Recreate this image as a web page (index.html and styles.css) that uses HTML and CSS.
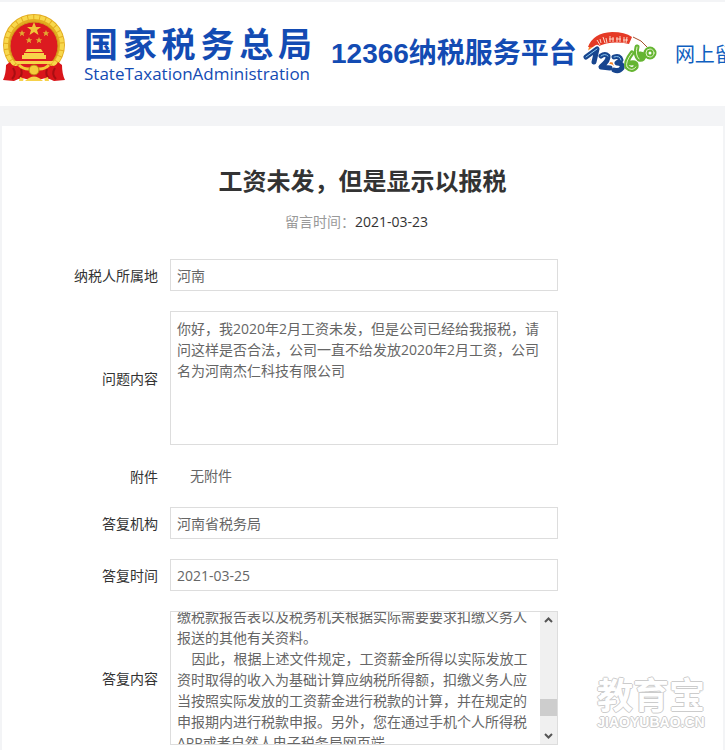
FILE: index.html
```html
<!DOCTYPE html>
<html lang="zh-CN">
<head>
    <meta charset="UTF-8">
    <meta name="viewport" content="width=device-width, initial-scale=1.0">
    <title>12366纳税服务平台</title>
    <link rel="stylesheet" href="styles.css">
</head>
<body>
<header class="header">
    <!-- National emblem -->
    <svg class="emblem" viewBox="0 0 66 72">
        <circle cx="33" cy="32" r="31" fill="#e3ac20"/>
        <circle cx="33" cy="32" r="28" fill="none" stroke="#f8d84c" stroke-width="4" stroke-dasharray="5 1"/>
        <circle cx="33" cy="33" r="24" fill="#dc1a20" stroke="#d09a1a"/>
        <path d="M33 9 l2 5 h5 l-4 3 1.500 5 -4.500-3 -4.500 3 1.500-5 -4-3 h5z" fill="#f0c63a"/>
        <g fill="#e2a832">
            <path d="M21 17 l1 2.300 h2.300 l-1.800 1.500 .6 2.400 -2.100-1.400 -2.100 1.400 .6-2.400 -1.800-1.500 H20z"/>
            <path d="M45 17 l1 2.300 h2.300 l-1.800 1.500 .6 2.400 -2.100-1.400 -2.100 1.400 .6-2.400 -1.800-1.500 H44z"/>
            <path d="M28 24 l1 2.300 h2.300 l-1.800 1.500 .6 2.400 -2.100-1.400 -2.100 1.400 .6-2.400 -1.800-1.500 H27z"/>
            <path d="M38 24 l1 2.300 h2.300 l-1.800 1.500 .6 2.400 -2.100-1.400 -2.100 1.400 .6-2.400 -1.800-1.500 H37z"/>
        </g>
        <path d="M26 36 h14 l2 3 h-18z M23 40 h20 v2 h-20z M21 42 h24 v4 h-24z M13 48 h40 l-3 3 H16z" fill="#f7d34a"/>
        <path d="M9 49 Q12 55 18 52 Q24 57 33 56 Q42 57 48 52 Q54 55 57 49 L61 52 Q61 61 64 67 L53 68 Q46 64 41 66 L25 66 Q20 64 13 68 L2 67 Q5 61 5 52 Z" fill="#d9151a"/>
        <path d="M12 55 Q16 61 11 66 M54 55 Q50 61 55 66 M20 56 Q22 62 18 65 M46 56 Q44 62 48 65" fill="none" stroke="#a80e12" stroke-width="2"/>
        <path d="M18 52 Q24 58 33 55 Q42 58 48 52" fill="none" stroke="#f3c938" stroke-width="3"/>
        <circle cx="33" cy="57" r="5" fill="#f4cc3b" stroke="#bb8211"/>
        <path d="M24 68 Q33 59 42 68 Z M19 64 q5 1 3 4 h-4z M47 64 q-5 1 -3 4 h4z" fill="#f6d14a"/>
    </svg>
    <div class="brand">
        <div class="brand-cn">国家税务总局</div>
        <div class="brand-en">StateTaxationAdministration</div>
    </div>
    <div class="platform">12366纳税服务平台</div>
    <!-- 12366 hotline mark -->
    <svg class="hotline" viewBox="0 0 74 44">
        <path d="M5 15 Q10 1 29 0 Q42 0 49 5 L46 12 Q28 8 14 15 Z" fill="#e53a26"/>
        <path d="M50 5 Q59 8 64 15" fill="none" stroke="#a8502c" stroke-width="1"/>
        <path d="M6 15 Q3 22 10 32 Q13 24 15 15 Z" fill="#f38022"/>
        <path d="M23 29 Q36 33 50 30 L44 38 Q33 40 24 38Z" fill="#f38022"/>
        <path d="M14 8 l3 5 M17 7 l1 4 M20 5 l2 6 M23 6 l1 5 M27 4 v6 M30 5 v5 M26 7 h5 M34 5 v5 M37 4 v6 M33 7 h5 M41 5 v6 M44 5 l-1 6 M40 8 h5" stroke="#fbd6c8" stroke-width="1"/>
        <g fill="none" stroke-linecap="round" stroke-linejoin="round">
            <g stroke="#fff" stroke-width="8">
                <path d="M3 25 L14 17 L11 30"/>
                <path d="M18 24 Q22 21 25 24 Q26 28 18 35 L27 36"/>
                <path d="M31 25 Q37 23 38 28 L34 31 Q40 31 39 36 Q36 40 31 38"/>
                <path d="M49 21 Q42 30 44 35 Q49 40 53 35 Q54 30 48 31"/>
            </g>
            <g stroke="#17458e" stroke-width="5">
                <path d="M3 25 L14 17 L11 30"/>
                <path d="M18 24 Q22 21 25 24 Q26 28 18 35 L27 36"/>
                <path d="M31 25 Q37 23 38 28 L34 31 Q40 31 39 36 Q36 40 31 38"/>
            </g>
            <path d="M3 25 L14 17 M18 24 Q22 21 25 24 M31 25 Q37 23 38 28" stroke="#8cc8ef" stroke-width="1"/>
            <g stroke="#65b532" stroke-width="5">
                <path d="M49 21 Q42 30 44 35 Q49 40 53 35 Q54 30 48 31"/>
                <path d="M54 15 Q52 23 56 27 Q61 28 61 23 L57 22"/>
                <circle cx="67" cy="21" r="4"/>
            </g>
            <g stroke="#e2f3c8" stroke-width="1">
                <path d="M49 21 Q42 30 44 35 Q49 40 53 35"/>
                <path d="M54 15 Q52 23 56 27"/>
                <circle cx="67" cy="21" r="4"/>
            </g>
        </g>
    </svg>
    <a class="nav-link" href="#">网上留言</a>
</header>

<main class="card">
    <h1 class="title">工资未发，但是显示以报税</h1>
    <p class="meta"><span class="meta-label">留言时间：</span>2021-03-23</p>

    <form class="form">
        <label for="area">纳税人所属地</label>
        <input class="field" type="text" id="area" value="河南" readonly>

        <label for="question">问题内容</label>
        <textarea class="field content" id="question" readonly>你好，我2020年2月工资未发，但是公司已经给我报税，请问这样是否合法，公司一直不给发放2020年2月工资，公司名为河南杰仁科技有限公司</textarea>

        <span class="label">附件</span>
        <span class="no-file">无附件</span>

        <label for="org">答复机构</label>
        <input class="field" type="text" id="org" value="河南省税务局" readonly>

        <label for="replyDate">答复时间</label>
        <input class="field" type="text" id="replyDate" value="2021-03-25" readonly>

        <label for="reply">答复内容</label>
        <div class="scroll-box">
            <textarea class="content reply" id="reply" readonly>缴税款报告表以及税务机关根据实际需要要求扣缴义务人报送的其他有关资料。
&nbsp;&nbsp;&nbsp;&nbsp;因此，根据上述文件规定，工资薪金所得以实际发放工资时取得的收入为基础计算应纳税所得额，扣缴义务人应当按照实际发放的工资薪金进行税款的计算，并在规定的申报期内进行税款申报。另外，您在通过手机个人所得税APP或者自然人电子税务局网页端

</textarea>
            <div class="scrollbar">
                <svg class="arrow" viewBox="0 0 17 17"><path d="M5 10 L8.500 6.500 L12 10"/></svg>
                <div class="track"><div class="thumb"></div></div>
                <svg class="arrow" viewBox="0 0 17 17"><path d="M5 7 L8.500 10.500 L12 7"/></svg>
            </div>
        </div>
    </form>
</main>

<div class="watermark">
    <div class="watermark-cn">教育宝</div>
    <div class="watermark-en">JIAOYUBAO.CN</div>
</div>

<script>
    document.getElementById("reply").scrollTop = 12;
</script>
</body>
</html>
```

FILE: styles.css
```css
* {
    box-sizing: border-box;
}
body {
    margin: 0;
    padding: 2px 0 0;
    background-color: #f3f4f6;
    color: #333;
    font-family: "Open Sans", "Noto Sans CJK SC", sans-serif;
    font-size: 14px;
    line-height: 21px;
    overflow: hidden;
}

/* Header */
.header {
    display: flex;
    align-items: center;
    height: 104px;
    padding-left: 1px;
    background-color: #fff;
    color: #134bb3;
    white-space: nowrap;
    overflow: hidden;
}
.header > * {
    flex-shrink: 0;
}
.emblem {
    width: 66px;
    height: 72px;
    margin-bottom: 10px;
}
.brand {
    width: 228px;
    margin-left: 17px;
}
.brand-cn {
    font-size: 34px;
    font-weight: bold;
    line-height: 40px;
    text-align-last: justify;
}
.brand-en {
    font-size: 17px;
    line-height: 20px;
}
.platform {
    margin-left: 19px;
    font-family: "Liberation Sans", "Noto Sans CJK SC", sans-serif;
    font-size: 28px;
    font-weight: bold;
    line-height: 40px;
}
.hotline {
    width: 74px;
    height: 44px;
    margin-left: 6px;
}
.nav-link {
    margin-left: 18px;
    color: #0f5fc0;
    font-size: 20px;
    text-decoration: none;
}

/* Message detail */
.card {
    min-height: 640px;
    margin: 20px 2px 0;
    padding: 36px 0 20px;
    background-color: #fff;
}
.title {
    margin: 0;
    font-size: 24px;
    line-height: 38px;
    text-align: center;
}
.meta {
    margin: 11px 0 27px;
    padding-right: 12px;
    text-align: center;
}
.meta-label {
    color: #999;
}
.form {
    display: grid;
    grid-template-columns: 156px minmax(0, 388px);
    column-gap: 12px;
    row-gap: 20px;
    align-items: center;
}
.form label,
.label {
    text-align: right;
}
.field,
.scroll-box {
    width: 100%;
    border: 1px solid #ddd;
    background-color: #fff;
}
.field,
.reply {
    display: block;
    margin: 0;
    padding: 0 6px;
    border-radius: 0;
    color: #666;
    font: inherit;
    outline: none;
    resize: none;
}
input.field {
    height: 32px;
}
.content {
    height: 134px;
    padding: 6px;
    overflow: hidden;
}
.no-file {
    height: 22px;
    padding-left: 20px;
    color: #666;
}
.scroll-box {
    display: flex;
    height: 134px;
}
.reply {
    flex: 1;
    min-width: 0;
    height: 100%;
    border: 0;
}
.scrollbar {
    display: flex;
    flex-direction: column;
    width: 17px;
    background-color: #f0f0f0;
}
.arrow {
    width: 17px;
    height: 17px;
    fill: none;
    stroke: #555;
    stroke-width: 2;
}
.track {
    display: flex;
    flex: 1;
    flex-direction: column;
    justify-content: flex-end;
    padding-bottom: 11px;
}
.thumb {
    height: 17px;
    background-color: #cdcdcd;
}

/* Watermark over the page corner */
.watermark {
    position: absolute;
    right: 20px;
    bottom: 20px;
    color: #fff;
    text-align: center;
    text-shadow: 1px 0 #ccc, -1px 0 #ccc, 0 1px #ccc, 0 -1px #ccc;
    font-weight: bold;
}
.watermark-cn {
    font-size: 36px;
    line-height: 36px;
}
.watermark-en {
    font-family: "Liberation Sans", sans-serif;
    font-size: 14px;
    line-height: 16px;
}
```
